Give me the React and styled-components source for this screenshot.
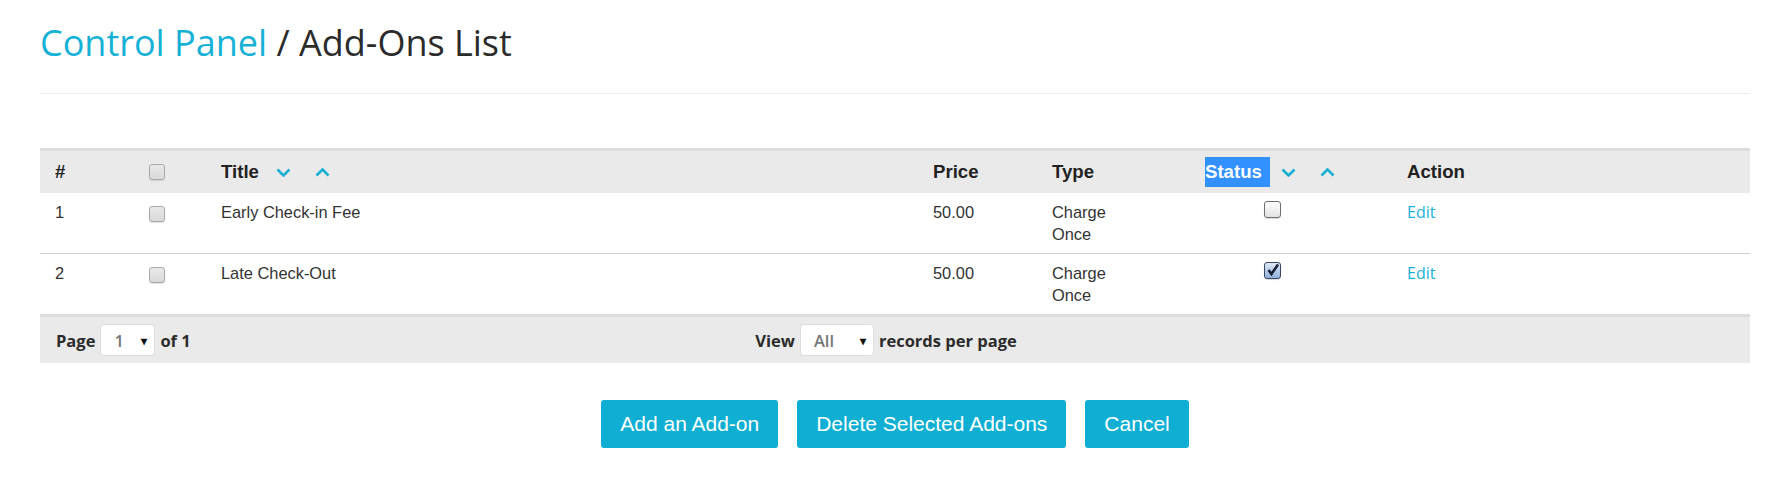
import React from "react";
import styled, { createGlobalStyle } from "styled-components";

const GlobalStyle = createGlobalStyle`
  html, body {
    margin: 0;
    padding: 0;
    background: #fff;
  }
  body {
    font-family: "Liberation Sans", Arial, sans-serif;
    color: #333;
  }
`;

const COLS = "94px 72px 712px 119px 153px 202px 1fr";

const Page = styled.div`
  padding: 23px 21px 40px 40px;
`;

const PageHeader = styled.div`
  padding-bottom: 30px;
  border-bottom: 1px solid #eee;
`;

const Heading = styled.h1`
  margin: 0;
  font-family: "Open Sans", sans-serif;
  font-weight: 400;
  font-size: 36px;
  line-height: 40px;
  color: #2b2b2b;
`;

const Crumb = styled.a`
  color: #16b1d6;
  text-decoration: none;
`;

const Table = styled.div`
  margin-top: 54px;
`;

const Row = styled.div`
  display: grid;
  grid-template-columns: ${COLS};
`;

const HeadRow = styled(Row)`
  height: 42px;
  align-items: center;
  background: #eaeaea;
  border-top: 3px solid #dcdcdc;
`;

const BodyRow = styled(Row)`
  height: 60px;
  align-items: start;
  & + & {
    border-top: 1px solid #cfcfcf;
  }
`;

const HeadCell = styled.div`
  display: flex;
  align-items: center;
  padding: 0 15px;
  font-weight: 700;
  font-size: 18.6px;
  line-height: 26px;
  color: #222;
`;

const Cell = styled.div`
  padding: ${(p) => p.$top || 8}px 15px 8px ${(p) => p.$left || 15}px;
  font-size: 16.4px;
  line-height: 22px;
  color: #333;
`;

const TypeText = styled.span`
  display: inline-block;
  max-width: 70px;
`;

const EditLink = styled.a`
  font-family: "Open Sans", sans-serif;
  font-size: 16px;
  color: #1ab1d8;
  text-decoration: none;
`;

const Selected = styled.span`
  display: inline-block;
  height: 30px;
  line-height: 30px;
  padding-right: 8px;
  background: #3390ff;
  color: #fff;
`;

const Sort = styled.span`
  display: inline-flex;
  align-items: center;
  gap: 24px;
  margin-left: ${(p) => p.$offset}px;
`;

const Box = styled.span`
  display: inline-block;
  box-sizing: border-box;
  width: 16px;
  height: 16px;
  border-radius: 3px;
  border: 1px solid #a9a9a9;
  background: linear-gradient(#e9e9e9, #d9d9d9);
  box-shadow: 0 1px 1px rgba(0, 0, 0, 0.12);
  vertical-align: top;
`;

const StatusBox = styled.span`
  position: relative;
  display: inline-block;
  box-sizing: border-box;
  width: 17px;
  height: 17px;
  border-radius: 3px;
  border: 1px solid ${(p) => (p.$checked ? "#3a4660" : "#6f6f6f")};
  background: ${(p) =>
    p.$checked
      ? "linear-gradient(#dfeaf8, #8fb0dc)"
      : "linear-gradient(#ffffff, #e2e2e2)"};
  box-shadow: 0 1px 1px rgba(0, 0, 0, 0.15);
  vertical-align: top;
  svg {
    position: absolute;
    left: 1px;
    top: 0px;
  }
`;

const Footer = styled.div`
  display: grid;
  grid-template-columns: 1fr auto 1fr;
  align-items: center;
  height: 46px;
  padding: 0 16px;
  background: #eaeaea;
  border-top: 3px solid #dcdcdc;
  font-family: "Open Sans", sans-serif;
  font-weight: 700;
  font-size: 16.5px;
  color: #2b2b2b;
`;

const Pager = styled.div`
  display: flex;
  align-items: center;
  gap: 5px;
  margin-right: ${(p) => p.$shift || 0}px;
`;

const Select = styled.span`
  display: inline-flex;
  align-items: center;
  justify-content: space-between;
  box-sizing: border-box;
  width: ${(p) => p.$w}px;
  height: 32px;
  padding: 0 7px 0 13px;
  background: #fff;
  border: 1px solid #dedede;
  border-radius: 4px;
  color: #777;
  font-weight: 600;
  &::after {
    content: "▾";
    font-size: 12px;
    color: #111;
  }
`;

const Actions = styled.div`
  display: flex;
  justify-content: center;
  gap: 19px;
  margin-top: 37px;
`;

const Button = styled.button`
  padding: 9px 19px;
  border: none;
  border-radius: 3px;
  background: #0eafd3;
  color: #fff;
  font-family: "Liberation Sans", Arial, sans-serif;
  font-size: 21px;
  line-height: 30px;
  cursor: pointer;
`;

function Chevron({ up }) {
  return (
    <svg width="15" height="9" viewBox="0 0 15 9">
      <path
        d={up ? "M1.5 7.5 L7.5 1.5 L13.5 7.5" : "M1.5 1.5 L7.5 7.5 L13.5 1.5"}
        fill="none"
        stroke="#17afd4"
        strokeWidth="2.6"
      />
    </svg>
  );
}

function SortIcons({ offset }) {
  return (
    <Sort $offset={offset}>
      <Chevron />
      <Chevron up />
    </Sort>
  );
}

function CheckMark() {
  return (
    <svg width="14" height="14" viewBox="0 0 14 14">
      <path
        d="M2.5 7 L5.5 11 L12 1.5"
        fill="none"
        stroke="#1a2233"
        strokeWidth="2.6"
      />
    </svg>
  );
}

const addons = [
  { id: 1, title: "Early Check-in Fee", price: "50.00", type: "Charge Once", active: false },
  { id: 2, title: "Late Check-Out", price: "50.00", type: "Charge Once", active: true },
];

export default function App() {
  return (
    <>
      <GlobalStyle />
      <Page>
        <PageHeader>
          <Heading>
            <Crumb href="#">Control Panel</Crumb> / Add-Ons List
          </Heading>
        </PageHeader>

        <Table>
          <HeadRow>
            <HeadCell>#</HeadCell>
            <HeadCell>
              <Box />
            </HeadCell>
            <HeadCell>
              Title
              <SortIcons offset={17} />
            </HeadCell>
            <HeadCell>Price</HeadCell>
            <HeadCell>Type</HeadCell>
            <HeadCell>
              <Selected>Status</Selected>
              <SortIcons offset={11} />
            </HeadCell>
            <HeadCell>Action</HeadCell>
          </HeadRow>

          {addons.map((a) => (
            <BodyRow key={a.id}>
              <Cell>{a.id}</Cell>
              <Cell $top={13}>
                <Box />
              </Cell>
              <Cell>{a.title}</Cell>
              <Cell>{a.price}</Cell>
              <Cell>
                <TypeText>{a.type}</TypeText>
              </Cell>
              <Cell $left={74}>
                <StatusBox $checked={a.active}>
                  {a.active && <CheckMark />}
                </StatusBox>
              </Cell>
              <Cell>
                <EditLink href="#">Edit</EditLink>
              </Cell>
            </BodyRow>
          ))}

          <Footer>
            <Pager>
              Page <Select $w={55}>1</Select> of 1
            </Pager>
            <Pager $shift={18}>
              View <Select $w={74}>All</Select> records per page
            </Pager>
            <span />
          </Footer>
        </Table>

        <Actions>
          <Button>Add an Add-on</Button>
          <Button>Delete Selected Add-ons</Button>
          <Button>Cancel</Button>
        </Actions>
      </Page>
    </>
  );
}
